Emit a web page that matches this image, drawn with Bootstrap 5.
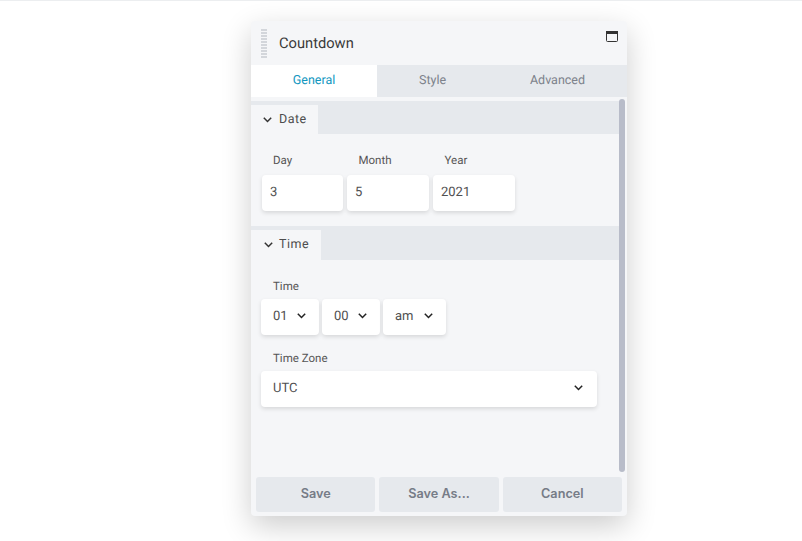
<!DOCTYPE html>
<html lang="en">
<head>
<meta charset="utf-8">
<title>Countdown</title>
<link href="https://cdn.jsdelivr.net/npm/bootstrap@5.3.0/dist/css/bootstrap.min.css" rel="stylesheet">
<style>
html,body{height:541px;overflow:hidden;background:#fff;font-family:Roboto,sans-serif;color:#444;text-rendering:geometricPrecision}
.page-rule{height:1px;background:#eceef0}
.stage{padding:20px 0 0 251px}
.panel-win{position:relative;width:376px;height:495px;background:#f5f6f8;border-radius:4px;box-shadow:0 10px 30px rgba(0,0,0,.2);overflow:hidden}
.win-head{height:44px;padding:0 10px}
.grip{width:6px;height:30px;margin-top:1px;background:repeating-linear-gradient(#d3d6db 0 2px,transparent 2px 3px)}
.win-title{font-size:14.7px;color:#3a3a3a;margin-left:12px;line-height:44px}
.max-ic{position:absolute;right:9px;top:10px}
.tabs-row{height:32px;background:#e6e9ed;font-size:12.5px}
.tab-item{text-align:center;line-height:31px;color:#7d828b}
.tab-item.on{background:#fff;color:#1297bf;width:126px}
.tab-mid{width:111px}
.tab-end{width:139px}
.scroll-body{position:relative;height:375px;padding-top:4px}
.thumb{position:absolute;right:2px;top:2px;width:6px;height:373px;border-radius:3px;background:#b8bcc9}
.sec-bar{background:#e6e9ed;margin-right:8px;display:flex;align-items:flex-end}
.sec-tab{background:#f5f6f8;display:flex;align-items:center;font-size:12.5px;letter-spacing:.5px;color:#4d4d4d;padding-left:12px}
.sec-date{height:33px}.sec-date .sec-tab{width:67px;height:29px;padding-top:1px}
.sec-time{height:34px;margin-top:15px}.sec-time .sec-tab{width:70px;height:30px;padding-left:13px}
.sec-tab svg{margin-right:7px}
.sec-time .sec-tab svg{margin-right:6px}
.fld-label{font-size:11.5px;color:#555;line-height:14px;display:block}
.date-row{padding:19px 0 0 11px;gap:4px}
.date-cell{width:81px}
.date-cell+.date-cell{width:82px}
.date-cell .fld-label{padding-left:11px;margin-bottom:8px}
.date-cell+.date-cell .fld-label{padding-left:11.5px}
.w-box{background:#fff;border-radius:4px;box-shadow:0 2px 4px rgba(0,0,0,.12);height:36px;font-size:13px;color:#505050;display:flex;align-items:center;padding-bottom:1px}
.date-cell .w-box{padding-left:8px}
.time-wrap{padding:19px 0 0 10px}
.time-wrap .fld-label{padding-left:12px;margin-bottom:6px}
.sel-row{gap:3px}
.sel-box{width:58px;padding-left:12px;position:relative}
.sel-box.wide{width:63px}
.sel-box svg{position:absolute;right:13px;top:14px}
.tz-box{width:336px;padding-left:12px;position:relative}
.tz-box svg{position:absolute;right:14px;top:14px}
.time-wrap .tz-label{margin-top:16px;margin-bottom:6px}
.foot-row{position:absolute;left:5px;right:5px;bottom:4px;gap:4px}
.foot-btn{flex:1 1 0;height:35px;padding:0 0 2px;border:0;border-radius:3px;background:#e6e9ed;color:#767c87;font-family:Inter,sans-serif;font-size:12.7px;font-weight:600}
.foot-btn:hover{background:#e6e9ed;color:#767c87}
</style>
</head>
<body>
<div class="page-rule"></div>
<div class="stage">
  <div class="panel-win">
    <div class="win-head d-flex align-items-center">
      <div class="grip"></div>
      <div class="win-title">Countdown</div>
      <svg class="max-ic" width="12" height="11" viewBox="0 0 12 11"><rect x=".5" y=".5" width="11" height="10" rx="1" fill="none" stroke="#333"/><rect x="0" y="0" width="12" height="3" fill="#333"/></svg>
    </div>
    <div class="tabs-row d-flex">
      <div class="tab-item on">General</div>
      <div class="tab-item tab-mid">Style</div>
      <div class="tab-item tab-end">Advanced</div>
    </div>
    <div class="scroll-body">
      <div class="thumb"></div>
      <div class="sec-bar sec-date"><div class="sec-tab">
        <svg width="9" height="6" viewBox="0 0 9 6"><path d="M.8.8 4.5 4.5 8.2.8" fill="none" stroke="#333" stroke-width="1.5"/></svg>Date</div></div>
      <div class="d-flex date-row">
        <div class="date-cell"><label class="fld-label">Day</label><div class="w-box">3</div></div>
        <div class="date-cell"><label class="fld-label">Month</label><div class="w-box">5</div></div>
        <div class="date-cell"><label class="fld-label">Year</label><div class="w-box">2021</div></div>
      </div>
      <div class="sec-bar sec-time"><div class="sec-tab">
        <svg width="9" height="6" viewBox="0 0 9 6"><path d="M.8.8 4.5 4.5 8.2.8" fill="none" stroke="#333" stroke-width="1.5"/></svg>Time</div></div>
      <div class="time-wrap">
        <label class="fld-label">Time</label>
        <div class="d-flex sel-row">
          <div class="w-box sel-box">01<svg width="9" height="6" viewBox="0 0 9 6"><path d="M.8.8 4.5 4.5 8.2.8" fill="none" stroke="#222" stroke-width="1.5"/></svg></div>
          <div class="w-box sel-box">00<svg width="9" height="6" viewBox="0 0 9 6"><path d="M.8.8 4.5 4.5 8.2.8" fill="none" stroke="#222" stroke-width="1.5"/></svg></div>
          <div class="w-box sel-box wide">am<svg width="9" height="6" viewBox="0 0 9 6"><path d="M.8.8 4.5 4.5 8.2.8" fill="none" stroke="#222" stroke-width="1.5"/></svg></div>
        </div>
        <label class="fld-label tz-label">Time Zone</label>
        <div class="w-box tz-box">UTC<svg width="9" height="6" viewBox="0 0 9 6"><path d="M.8.8 4.5 4.5 8.2.8" fill="none" stroke="#222" stroke-width="1.5"/></svg></div>
      </div>
    </div>
    <div class="d-flex foot-row">
      <button class="btn foot-btn">Save</button>
      <button class="btn foot-btn">Save As...</button>
      <button class="btn foot-btn">Cancel</button>
    </div>
  </div>
</div>
<script src="https://cdn.jsdelivr.net/npm/bootstrap@5.3.0/dist/js/bootstrap.bundle.min.js"></script>
</body>
</html>
